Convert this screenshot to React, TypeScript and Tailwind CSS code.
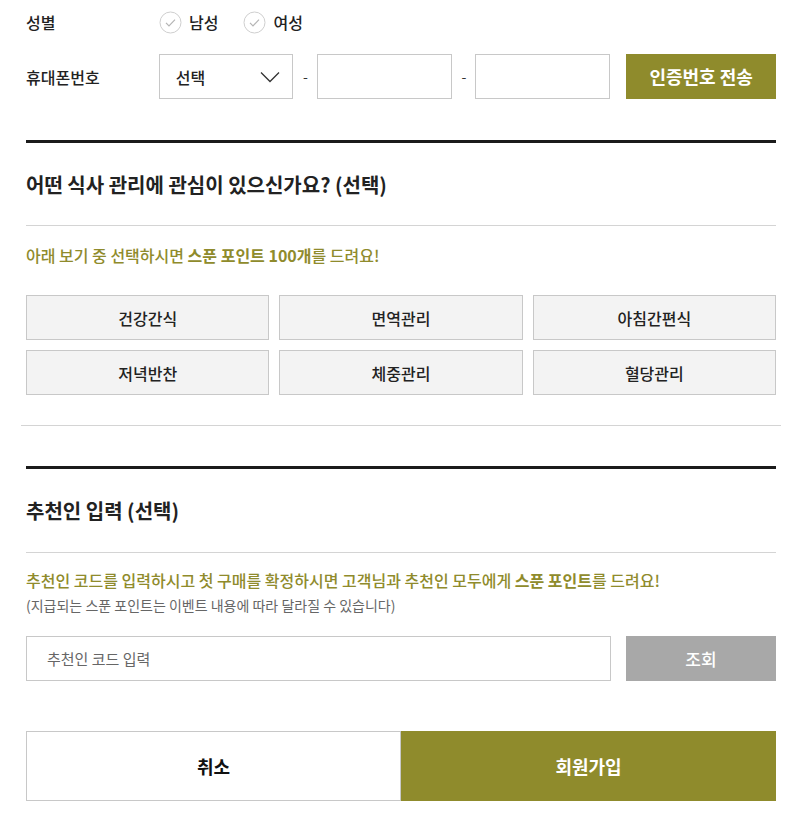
import { useState } from "react";

const interests = ["건강간식", "면역관리", "아침간편식", "저녁반찬", "체중관리", "혈당관리"];

function CheckCircle() {
  return (
    <svg width="23" height="23" viewBox="0 0 23 23" fill="none">
      <circle cx="11.5" cy="11.5" r="10.5" stroke="#cfcfcf" strokeWidth="1" />
      <path d="M7 11.8l3 3 6-6.2" stroke="#b5b5b5" strokeWidth="1.2" fill="none" />
    </svg>
  );
}

export default function App() {
  const [gender, setGender] = useState("");
  const [picked, setPicked] = useState<string[]>([]);

  const toggle = (name: string) => {
    setPicked((prev) => (prev.includes(name) ? prev.filter((p) => p !== name) : [...prev, name]));
  };

  return (
    <div
      className="w-[804px] bg-white text-[#222]"
      style={{ fontFamily: '"Noto Sans CJK KR", "Noto Sans", sans-serif' }}
    >
      <div className="ml-[21px] w-[760px]">
        <div className="px-[5px]">
          {/* 성별 */}
          <div className="flex items-center h-[22px] mt-[11px]">
            <span className="w-[133px] text-[16px] font-medium">성별</span>
            <div className="flex items-center gap-[25px]">
              {["남성", "여성"].map((g) => (
                <label
                  key={g}
                  className="flex items-center gap-[7px] cursor-pointer"
                  onClick={() => setGender(g)}
                >
                  <CheckCircle />
                  <span className={`text-[16px] ${gender === g ? "font-bold" : "font-medium"}`}>{g}</span>
                </label>
              ))}
            </div>
          </div>

          {/* 휴대폰번호 */}
          <div className="flex items-center mt-[21px]">
            <span className="w-[133px] text-[16px] font-medium">휴대폰번호</span>
            <div className="flex items-center w-[135px] h-[45px] border border-[#c8c8c8] pl-[16px] pr-[12px] justify-between">
              <span className="text-[16px] font-medium">선택</span>
              <svg width="20" height="12" viewBox="0 0 20 12" fill="none">
                <path d="M1 1.5l9 9 9-9" stroke="#333" strokeWidth="1.3" />
              </svg>
            </div>
            <span className="w-[24px] text-center text-[14px] text-[#333]">-</span>
            <input className="w-[135px] h-[45px] border border-[#c8c8c8] outline-none px-2" />
            <span className="w-[23px] text-center text-[14px] text-[#333]">-</span>
            <input className="w-[135px] h-[45px] border border-[#c8c8c8] outline-none px-2" />
            <button className="ml-[16px] w-[150px] h-[45px] bg-[#8f8b2c] text-white text-[18px] font-bold">
              인증번호 전송
            </button>
          </div>

          {/* 식사 관리 */}
          <div className="mt-[41px] h-[3px] bg-[#1b1b1b]" />
          <h2 className="mt-[27px] text-[20px] font-bold leading-[30px]">
            어떤 식사 관리에 관심이 있으신가요? (선택)
          </h2>
          <div className="mt-[25px] h-px bg-[#d4d4d4]" />
          <p className="mt-[17px] text-[16px] font-medium text-[#8f8b2c] leading-[24px]">
            아래 보기 중 선택하시면 <b className="font-bold">스푼 포인트 100개</b>를 드려요!
          </p>
          <div className="mt-[28px] grid grid-cols-3 gap-x-[10px] gap-y-[10px]">
            {interests.map((name) => (
              <button
                key={name}
                onClick={() => toggle(name)}
                className={`h-[45px] border text-[16px] font-medium ${
                  picked.includes(name)
                    ? "border-[#8f8b2c] bg-white text-[#8f8b2c]"
                    : "border-[#c8c8c8] bg-[#f3f3f3] text-[#222]"
                }`}
              >
                {name}
              </button>
            ))}
          </div>
        </div>

        <div className="mt-[30px] h-px bg-[#d4d4d4]" />

        <div className="px-[5px]">
          {/* 추천인 */}
          <div className="mt-[40px] h-[3px] bg-[#1b1b1b]" />
          <h2 className="mt-[27px] text-[20px] font-bold leading-[30px]">추천인 입력 (선택)</h2>
          <div className="mt-[26px] h-px bg-[#d4d4d4]" />
          <p className="mt-[15px] text-[16px] font-medium text-[#8f8b2c] leading-[24px]">
            추천인 코드를 입력하시고 첫 구매를 확정하시면 고객님과 추천인 모두에게{" "}
            <b className="font-bold">스푼 포인트</b>를 드려요!
          </p>
          <p className="mt-[3px] text-[14px] text-[#666] leading-[20px]">
            (지급되는 스푼 포인트는 이벤트 내용에 따라 달라질 수 있습니다)
          </p>
          <div className="mt-[21px] flex">
            <input
              placeholder="추천인 코드 입력"
              className="w-[585px] h-[45px] border border-[#c8c8c8] px-[20px] text-[15px] outline-none placeholder:text-[#666]"
            />
            <button className="ml-[15px] w-[150px] h-[45px] bg-[#a8a8a8] text-white text-[17px] font-medium">
              조회
            </button>
          </div>

          {/* 하단 버튼 */}
          <div className="mt-[50px] mb-[16px] flex">
            <button className="w-[375px] h-[70px] border border-[#c8c8c8] bg-white text-[18px] font-bold text-[#111]">
              취소
            </button>
            <button className="w-[375px] h-[70px] bg-[#8f8b2c] text-[18px] font-bold text-white">회원가입</button>
          </div>
        </div>
      </div>
    </div>
  );
}
